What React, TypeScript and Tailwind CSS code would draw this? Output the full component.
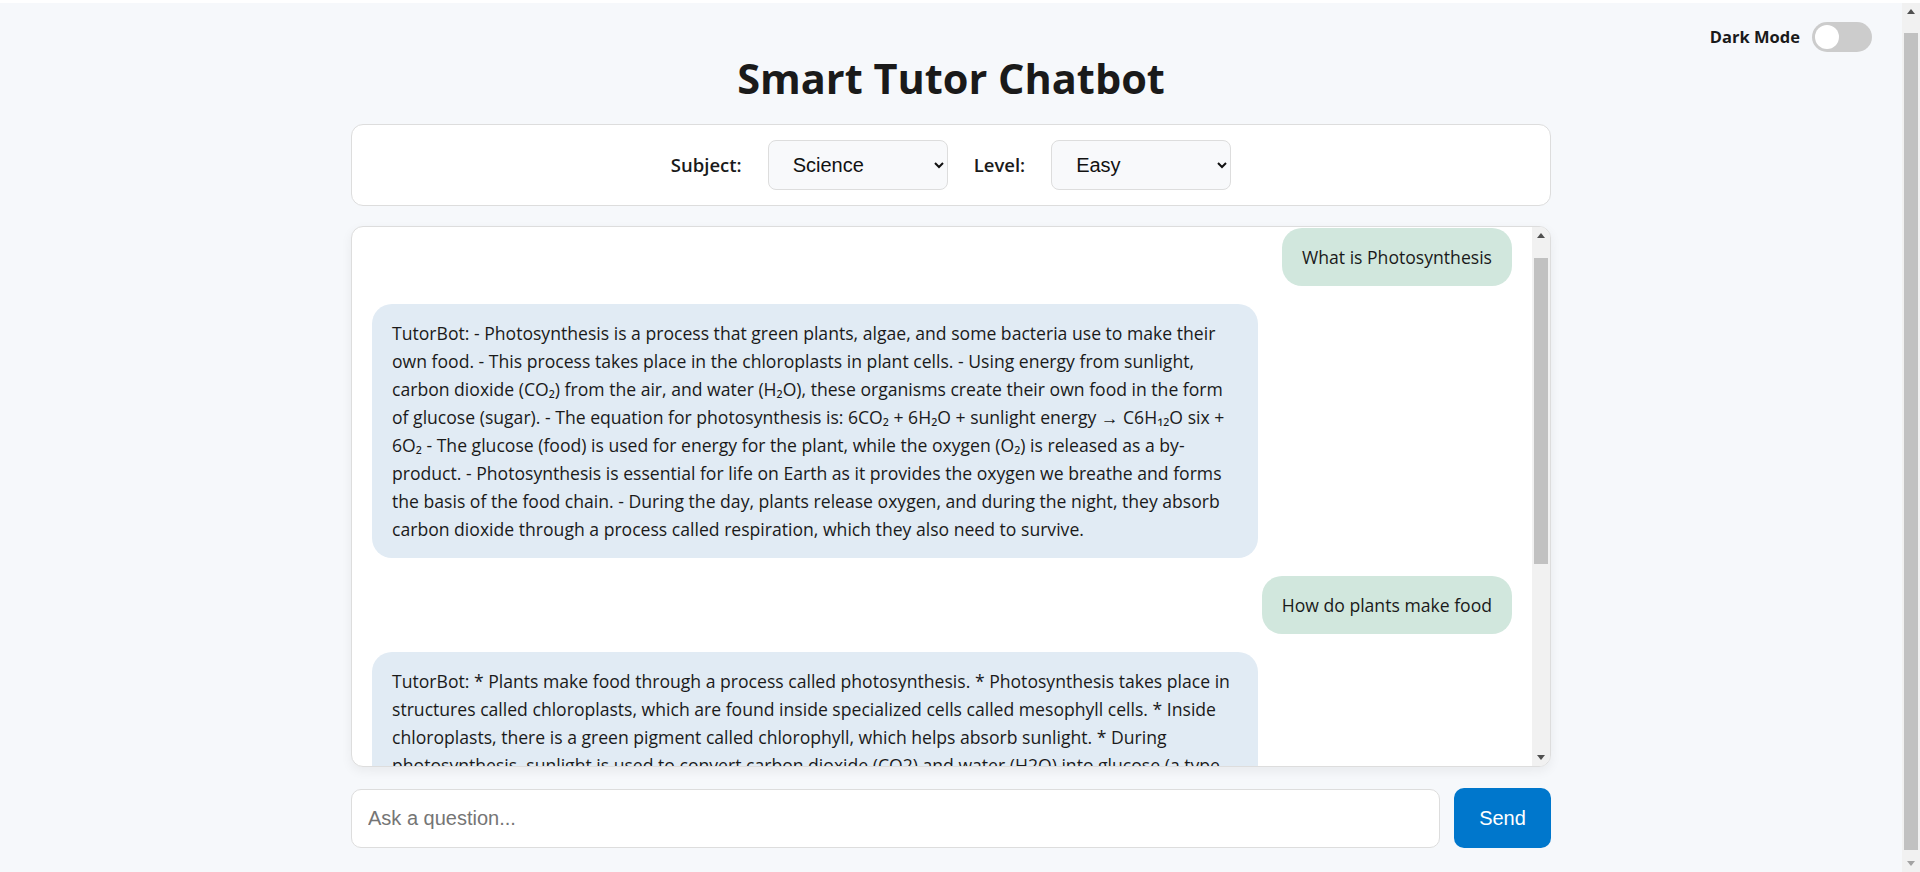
import { useEffect, useRef } from "react";

const botOne =
  "TutorBot: - Photosynthesis is a process that green plants, algae, and some bacteria use to make their own food. - This process takes place in the chloroplasts in plant cells. - Using energy from sunlight, carbon dioxide (CO₂) from the air, and water (H₂O), these organisms create their own food in the form of glucose (sugar). - The equation for photosynthesis is: 6CO₂ + 6H₂O + sunlight energy → C6H₁₂O six + 6O₂ - The glucose (food) is used for energy for the plant, while the oxygen (O₂) is released as a by-product. - Photosynthesis is essential for life on Earth as it provides the oxygen we breathe and forms the basis of the food chain. - During the day, plants release oxygen, and during the night, they absorb carbon dioxide through a process called respiration, which they also need to survive.";

const botTwo =
  "TutorBot: * Plants make food through a process called photosynthesis. * Photosynthesis takes place in structures called chloroplasts, which are found inside specialized cells called mesophyll cells. * Inside chloroplasts, there is a green pigment called chlorophyll, which helps absorb sunlight. * During photosynthesis, sunlight is used to convert carbon dioxide (CO2) and water (H2O) into glucose (a type of sugar) and oxygen (O2). * The process can be summarized by the equation: 6CO2 + 6H2O + light energy → C6H12O6 + 6O2. * Plants take in carbon dioxide from the air through tiny openings in their leaves called stomata. * Water is absorbed from the soil by the roots and carried up to the leaves through tubes called xylem. * The glucose produced is used by the plant for energy, and it can also be stored as starch. * The oxygen produced is released into the air through the stomata.";

const messages = [
  { from: "user", text: "What is Photosynthesis" },
  { from: "bot", text: botOne },
  { from: "user", text: "How do plants make food" },
  { from: "bot", text: botTwo },
];

function Arrow({ up, color }: { up?: boolean; color: string }) {
  return (
    <svg width="8" height="5" viewBox="0 0 8 5">
      <polygon points={up ? "0,5 8,5 4,0" : "0,0 8,0 4,5"} fill={color} />
    </svg>
  );
}

function Scrollbar({
  gapTop,
  thumb,
  downColor,
}: {
  gapTop: string;
  thumb: string;
  downColor: string;
}) {
  return (
    <div className="flex w-[18px] shrink-0 flex-col bg-[#f1f1f1]">
      <div className="flex h-[17px] shrink-0 items-center justify-center">
        <Arrow up color="#505050" />
      </div>
      <div className={`flex flex-1 flex-col px-[2px] ${gapTop}`}>
        <div className={`${thumb} bg-[#c1c1c1]`} />
      </div>
      <div className="flex h-[17px] shrink-0 items-center justify-center">
        <Arrow color={downColor} />
      </div>
    </div>
  );
}

function UserBubble({ text }: { text: string }) {
  return (
    <div className="self-end rounded-[20px] bg-[#d1e7dd] px-5 py-[15px] text-[17.6px] leading-[28px] text-[#1a1a1a]">
      {text}
    </div>
  );
}

function BotBubble({ text }: { text: string }) {
  return (
    <div className="max-w-[886px] self-start rounded-[20px] bg-[#e1ebf4] px-5 py-[15px] text-[17.6px] leading-[28px] text-[#1a1a1a]">
      {text}
    </div>
  );
}

export default function App() {
  const chatRef = useRef<HTMLDivElement>(null);

  useEffect(() => {
    if (chatRef.current) chatRef.current.scrollTop = 19;
  }, []);

  return (
    <div className="flex h-screen flex-col bg-[#f6f8fb] font-['Open_Sans','Segoe_UI',sans-serif] text-[#1a1a1a]">
      <div className="h-[3px] shrink-0 bg-white" />

      <div className="flex min-h-0 flex-1">
        <main className="min-w-0 flex-1 overflow-hidden">
          <div className="flex items-center justify-end gap-3 pr-[30px] pt-[19px]">
            <span className="text-[16.5px] font-bold">Dark Mode</span>
            <div className="flex h-[30px] w-[60px] items-center rounded-full bg-[#cccccc] px-[3px]">
              <div className="h-[24px] w-[24px] rounded-full bg-white" />
            </div>
          </div>

          <h1 className="text-center text-[41.5px] font-bold leading-[52px] text-[#1a1a1a]">
            Smart Tutor Chatbot
          </h1>

          <div className="mx-auto mt-[20px] flex w-[1200px] items-center justify-center gap-[26px] rounded-[12px] border border-[#dddddd] bg-white py-[15px]">
            <label className="text-[18.5px] font-semibold">Subject:</label>
            <select
              defaultValue="Science"
              className="h-[50px] w-[180px] rounded-[8px] border border-[#dddddd] bg-[#f8f9fb] pl-[20px] pr-[6px] font-['Liberation_Sans',Arial,sans-serif] text-[20px] text-[#111]"
            >
              <option>Math</option>
              <option>Science</option>
              <option>History</option>
              <option>English</option>
            </select>
            <label className="text-[18.5px] font-semibold">Level:</label>
            <select
              defaultValue="Easy"
              className="h-[50px] w-[180px] rounded-[8px] border border-[#dddddd] bg-[#f8f9fb] pl-[20px] pr-[6px] font-['Liberation_Sans',Arial,sans-serif] text-[20px] text-[#111]"
            >
              <option>Easy</option>
              <option>Medium</option>
              <option>Hard</option>
            </select>
          </div>

          <div className="mx-auto mt-[20px] flex h-[541px] w-[1200px] overflow-hidden rounded-[12px] border border-[#dddddd] bg-white shadow-[0_4px_12px_rgba(0,0,0,0.06)]">
            <div ref={chatRef} className="flex min-w-0 flex-1 flex-col gap-[18px] overflow-hidden p-[20px]">
              {messages.map((m, i) =>
                m.from === "user" ? <UserBubble key={i} text={m.text} /> : <BotBubble key={i} text={m.text} />
              )}
            </div>
            <Scrollbar gapTop="pt-[14px]" thumb="h-[306px]" downColor="#505050" />
          </div>

          <div className="mx-auto mt-[21px] flex w-[1200px] items-center gap-[14px]">
            <input
              placeholder="Ask a question..."
              className="h-[59px] flex-1 rounded-[10px] border border-[#dddddd] bg-white px-[16px] font-['Liberation_Sans',Arial,sans-serif] text-[20px] outline-none placeholder:text-[#757575]"
            />
            <button className="h-[60px] w-[97px] rounded-[10px] bg-[#0077cc] font-['Liberation_Sans',Arial,sans-serif] text-[20px] text-white">
              Send
            </button>
          </div>
        </main>

        <Scrollbar gapTop="pt-[13px]" thumb="h-[817px]" downColor="#a3a3a3" />
      </div>
    </div>
  );
}
